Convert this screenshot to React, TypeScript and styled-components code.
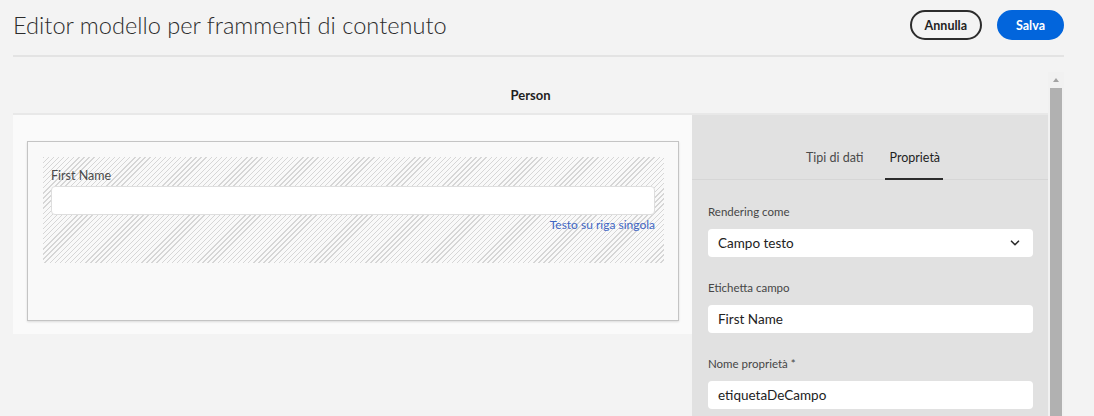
import React from "react";
import styled, { createGlobalStyle } from "styled-components";

const GlobalStyle = createGlobalStyle`
  html, body {
    margin: 0;
    padding: 0;
    background: #f3f3f3;
    font-family: Lato, "Noto Sans", sans-serif;
    color: #2c2c2c;
    overflow: hidden;
  }
  * { box-sizing: border-box; }
`;

const Page = styled.div`
  width: 1094px;
  height: 416px;
  padding: 0 30px 0 13px;
  display: flex;
  flex-direction: column;
  overflow: hidden;
`;

const Header = styled.header`
  height: 57px;
  display: flex;
  align-items: flex-start;
  justify-content: space-between;
  padding-top: 10px;
  border-bottom: 2px solid #e3e3e3;
  flex-shrink: 0;
`;

const Title = styled.h1`
  margin: 0;
  font-family: Lato, sans-serif;
  font-weight: 300;
  font-size: 23.6px;
  line-height: 30px;
  color: #2c2c2c;
`;

const Actions = styled.div`
  display: flex;
  gap: 15px;
`;

const Button = styled.button<{ $primary?: boolean }>`
  height: 30px;
  padding: 0 ${(p) => (p.$primary ? "17px" : "13px")};
  border-radius: 15px;
  font-family: Lato, sans-serif;
  font-weight: 700;
  font-size: 12.5px;
  cursor: pointer;
  border: 2px solid ${(p) => (p.$primary ? "#0265dc" : "#2c2c2c")};
  background: ${(p) => (p.$primary ? "#0265dc" : "transparent")};
  color: ${(p) => (p.$primary ? "#ffffff" : "#222")};
`;

const Body = styled.div`
  margin-top: 15px;
  flex: 1;
  display: flex;
  min-height: 0;
`;

const Content = styled.main`
  flex: 1;
  display: flex;
  flex-direction: column;
  min-width: 0;
`;

const ModelTitle = styled.div`
  height: 43px;
  padding-top: 14px;
  text-align: center;
  font-weight: 700;
  font-size: 13px;
  line-height: 18px;
  color: #1f1f1f;
  border-bottom: 2px solid #e8e8e8;
  flex-shrink: 0;
`;

const Panels = styled.div`
  flex: 1;
  display: flex;
  align-items: flex-start;
`;

const Canvas = styled.section`
  width: 679px;
  padding: 26px 13px 13px 14px;
  background: #fafafa;
`;

const Card = styled.div`
  height: 180px;
  background: #f9f9f9;
  border: 1px solid #c4c4c4;
  box-shadow: 0 1px 2px rgba(0, 0, 0, 0.12);
  padding: 15px 14px 0 15px;
`;

const FieldSlot = styled.div`
  height: 106px;
  padding: 10px 9px 0 8px;
  background: repeating-linear-gradient(
    135deg,
    #d6d6d6 0 1px,
    transparent 1px 3.6px
  );
  display: flex;
  flex-direction: column;
`;

const SlotLabel = styled.span`
  font-size: 12.5px;
  line-height: 18px;
  margin-bottom: 1px;
  color: #4b4b4b;
`;

const PreviewInput = styled.div`
  height: 29px;
  background: #ffffff;
  border: 1px solid #dedede;
  border-radius: 4px;
`;

const TypeHint = styled.span`
  align-self: flex-end;
  margin-top: 1px;
  font-size: 12px;
  line-height: 18px;
  color: #3f66c4;
`;

const Sidebar = styled.aside`
  flex: 1;
  align-self: stretch;
  background: #e1e1e1;
  display: flex;
  flex-direction: column;
`;

const Tabs = styled.nav`
  height: 65px;
  display: flex;
  justify-content: center;
  align-items: flex-end;
  gap: 18px;
  border-bottom: 1px solid #d6d6d6;
  padding-left: 4px;
`;

const Tab = styled.div<{ $active?: boolean }>`
  height: 30px;
  padding: 0 3px 0 5px;
  font-size: 12.5px;
  line-height: 16px;
  color: ${(p) => (p.$active ? "#1f1f1f" : "#4b4b4b")};
  border-bottom: 2px solid ${(p) => (p.$active ? "#2c2c2c" : "transparent")};
  margin-bottom: -1px;
`;

const Form = styled.div`
  padding: 24px 15px 0 16px;
  display: flex;
  flex-direction: column;
  gap: 23px;
`;

const Group = styled.div`
  display: flex;
  flex-direction: column;
  gap: 9px;
`;

const Label = styled.label`
  font-size: 11.5px;
  line-height: 16px;
  color: #464646;
`;

const TextBox = styled.div`
  height: 28px;
  background: #ffffff;
  border-radius: 4px;
  padding: 0 10px 0 10px;
  display: flex;
  align-items: center;
  justify-content: space-between;
  font-size: 13.5px;
  color: #222;
`;

const Chevron = styled.svg`
  width: 10px;
  height: 10px;
  margin-right: 3px;
`;

const Scrollbar = styled.div`
  width: 16px;
  background: #f1f1f1;
  display: flex;
  flex-direction: column;
  padding-left: 2px;
  padding-right: 2px;
`;

const ScrollButton = styled.div`
  height: 16px;
  display: flex;
  align-items: center;
  justify-content: center;
`;

const UpArrow = styled.div`
  width: 0;
  height: 0;
  border-left: 3.5px solid transparent;
  border-right: 3.5px solid transparent;
  border-bottom: 4px solid #a3a3a3;
`;

const Thumb = styled.div`
  flex: 1;
  background: #b1b1b1;
`;

export default function App() {
  return (
    <>
      <GlobalStyle />
      <Page>
        <Header>
          <Title>Editor modello per frammenti di contenuto</Title>
          <Actions>
            <Button>Annulla</Button>
            <Button $primary>Salva</Button>
          </Actions>
        </Header>
        <Body>
          <Content>
            <ModelTitle>Person</ModelTitle>
            <Panels>
              <Canvas>
                <Card>
                  <FieldSlot>
                    <SlotLabel>First Name</SlotLabel>
                    <PreviewInput />
                    <TypeHint>Testo su riga singola</TypeHint>
                  </FieldSlot>
                </Card>
              </Canvas>
              <Sidebar>
                <Tabs>
                  <Tab>Tipi di dati</Tab>
                  <Tab $active>Proprietà</Tab>
                </Tabs>
                <Form>
                  <Group>
                    <Label>Rendering come</Label>
                    <TextBox>
                      Campo testo
                      <Chevron viewBox="0 0 10 10">
                        <path d="M1.5 3.2 L5 6.7 L8.5 3.2" fill="none" stroke="#2c2c2c" strokeWidth="1.6" strokeLinecap="round" strokeLinejoin="round" />
                      </Chevron>
                    </TextBox>
                  </Group>
                  <Group>
                    <Label>Etichetta campo</Label>
                    <TextBox>First Name</TextBox>
                  </Group>
                  <Group>
                    <Label>Nome proprietà *</Label>
                    <TextBox>etiquetaDeCampo</TextBox>
                  </Group>
                </Form>
              </Sidebar>
            </Panels>
          </Content>
          <Scrollbar>
            <ScrollButton>
              <UpArrow />
            </ScrollButton>
            <Thumb />
          </Scrollbar>
        </Body>
      </Page>
    </>
  );
}
